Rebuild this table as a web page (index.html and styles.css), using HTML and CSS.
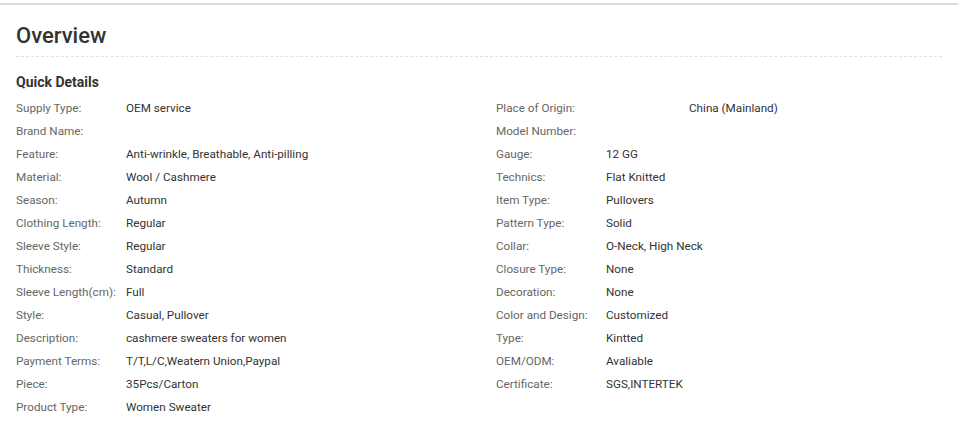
FILE: index.html
```html
<!DOCTYPE html>
<html lang="en">
<head>
<meta charset="utf-8">
<title>Overview</title>
<link rel="stylesheet" href="styles.css">
</head>
<body>
<div class="topline"></div>
<section class="overview">
  <h2 class="title">Overview</h2>
  <h3 class="subtitle">Quick Details</h3>
  <div class="details">
    <div class="col">
      <div class="row"><span class="label">Supply Type:</span><span class="value">OEM service</span></div>
      <div class="row"><span class="label">Brand Name:</span><span class="value"></span></div>
      <div class="row"><span class="label">Feature:</span><span class="value">Anti-wrinkle, Breathable, Anti-pilling</span></div>
      <div class="row"><span class="label">Material:</span><span class="value">Wool / Cashmere</span></div>
      <div class="row"><span class="label">Season:</span><span class="value">Autumn</span></div>
      <div class="row"><span class="label">Clothing Length:</span><span class="value">Regular</span></div>
      <div class="row"><span class="label">Sleeve Style:</span><span class="value">Regular</span></div>
      <div class="row"><span class="label">Thickness:</span><span class="value">Standard</span></div>
      <div class="row"><span class="label">Sleeve Length(cm):</span><span class="value">Full</span></div>
      <div class="row"><span class="label">Style:</span><span class="value">Casual, Pullover</span></div>
      <div class="row"><span class="label">Description:</span><span class="value">cashmere sweaters for women</span></div>
      <div class="row"><span class="label">Payment Terms:</span><span class="value">T/T,L/C,Weatern Union,Paypal</span></div>
      <div class="row"><span class="label">Piece:</span><span class="value">35Pcs/Carton</span></div>
      <div class="row"><span class="label">Product Type:</span><span class="value">Women Sweater</span></div>
    </div>
    <div class="col">
      <div class="row"><span class="label label-wide">Place of Origin:</span><span class="value">China (Mainland)</span></div>
      <div class="row"><span class="label">Model Number:</span><span class="value"></span></div>
      <div class="row"><span class="label">Gauge:</span><span class="value">12 GG</span></div>
      <div class="row"><span class="label">Technics:</span><span class="value">Flat Knitted</span></div>
      <div class="row"><span class="label">Item Type:</span><span class="value">Pullovers</span></div>
      <div class="row"><span class="label">Pattern Type:</span><span class="value">Solid</span></div>
      <div class="row"><span class="label">Collar:</span><span class="value">O-Neck, High Neck</span></div>
      <div class="row"><span class="label">Closure Type:</span><span class="value">None</span></div>
      <div class="row"><span class="label">Decoration:</span><span class="value">None</span></div>
      <div class="row"><span class="label">Color and Design:</span><span class="value">Customized</span></div>
      <div class="row"><span class="label">Type:</span><span class="value">Kintted</span></div>
      <div class="row"><span class="label">OEM/ODM:</span><span class="value">Avaliable</span></div>
      <div class="row"><span class="label">Certificate:</span><span class="value">SGS,INTERTEK</span></div>
    </div>
  </div>
</section>
</body>
</html>
```

FILE: styles.css
```css
html, body {
  margin: 0;
  padding: 0;
  background: #fff;
}
body {
  font-family: Roboto, "Liberation Sans", Arial, sans-serif;
  color: #333;
}
.topline {
  margin-top: 3px;
  height: 2px;
  background: #dcdcdc;
}
.overview {
  padding: 0 16px;
}
.title {
  margin: 0;
  padding-top: 18px;
  padding-bottom: 7px;
  font-size: 22px;
  line-height: 26px;
  font-weight: 500;
  color: #333;
  border-bottom: 1px dashed #e2e2e2;
}
.subtitle {
  margin: 0;
  padding-top: 15px;
  font-size: 14px;
  line-height: 20px;
  font-weight: 700;
  color: #333;
}
.details {
  display: grid;
  grid-template-columns: 480px 1fr;
  padding-top: 4px;
}
.row {
  display: flex;
  height: 23px;
  align-items: center;
  font-size: 11.7px;
}
.label {
  width: 110px;
  flex: none;
  color: #666;
}
.label-wide {
  width: 193px;
}
.value {
  color: #333;
}
```
